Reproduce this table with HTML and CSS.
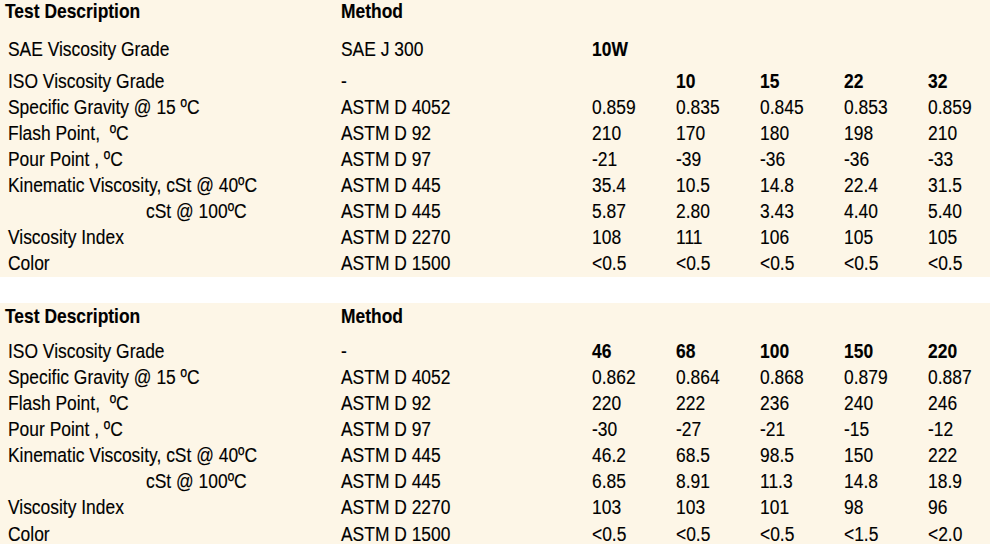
FILE: index.html
```html
<!DOCTYPE html>
<html lang="en">
<head>
<meta charset="utf-8">
<title>Typical Properties</title>
<link rel="stylesheet" href="styles.css">
</head>
<body>
<section class="spec spec-first">
  <div class="row head head-first"><span class="label hd">Test Description</span><span class="method hd">Method</span></div>
  <div class="row row-sae"><span class="label">SAE Viscosity Grade</span><span class="method">SAE J 300</span><span class="val b">10W</span></div>
  <div class="row"><span class="label">ISO Viscosity Grade</span><span class="method">-</span><span class="val"></span><span class="val b">10</span><span class="val b">15</span><span class="val b">22</span><span class="val b">32</span></div>
  <div class="row"><span class="label">Specific Gravity @ 15 ºC</span><span class="method">ASTM D 4052</span><span class="val">0.859</span><span class="val">0.835</span><span class="val">0.845</span><span class="val">0.853</span><span class="val">0.859</span></div>
  <div class="row"><span class="label">Flash Point,&nbsp; ºC</span><span class="method">ASTM D 92</span><span class="val">210</span><span class="val">170</span><span class="val">180</span><span class="val">198</span><span class="val">210</span></div>
  <div class="row"><span class="label">Pour Point , ºC</span><span class="method">ASTM D 97</span><span class="val">-21</span><span class="val">-39</span><span class="val">-36</span><span class="val">-36</span><span class="val">-33</span></div>
  <div class="row"><span class="label">Kinematic Viscosity, cSt @ 40ºC</span><span class="method">ASTM D 445</span><span class="val">35.4</span><span class="val">10.5</span><span class="val">14.8</span><span class="val">22.4</span><span class="val">31.5</span></div>
  <div class="row"><span class="label indent">cSt @ 100ºC</span><span class="method">ASTM D 445</span><span class="val">5.87</span><span class="val">2.80</span><span class="val">3.43</span><span class="val">4.40</span><span class="val">5.40</span></div>
  <div class="row"><span class="label">Viscosity Index</span><span class="method">ASTM D 2270</span><span class="val">108</span><span class="val">111</span><span class="val">106</span><span class="val">105</span><span class="val">105</span></div>
  <div class="row"><span class="label">Color</span><span class="method">ASTM D 1500</span><span class="val">&lt;0.5</span><span class="val">&lt;0.5</span><span class="val">&lt;0.5</span><span class="val">&lt;0.5</span><span class="val">&lt;0.5</span></div>
</section>
<section class="spec spec-second">
  <div class="row head"><span class="label hd">Test Description</span><span class="method hd">Method</span></div>
  <div class="row"><span class="label">ISO Viscosity Grade</span><span class="method">-</span><span class="val b">46</span><span class="val b">68</span><span class="val b">100</span><span class="val b">150</span><span class="val b">220</span></div>
  <div class="row"><span class="label">Specific Gravity @ 15 ºC</span><span class="method">ASTM D 4052</span><span class="val">0.862</span><span class="val">0.864</span><span class="val">0.868</span><span class="val">0.879</span><span class="val">0.887</span></div>
  <div class="row"><span class="label">Flash Point,&nbsp; ºC</span><span class="method">ASTM D 92</span><span class="val">220</span><span class="val">222</span><span class="val">236</span><span class="val">240</span><span class="val">246</span></div>
  <div class="row"><span class="label">Pour Point , ºC</span><span class="method">ASTM D 97</span><span class="val">-30</span><span class="val">-27</span><span class="val">-21</span><span class="val">-15</span><span class="val">-12</span></div>
  <div class="row"><span class="label">Kinematic Viscosity, cSt @ 40ºC</span><span class="method">ASTM D 445</span><span class="val">46.2</span><span class="val">68.5</span><span class="val">98.5</span><span class="val">150</span><span class="val">222</span></div>
  <div class="row"><span class="label indent">cSt @ 100ºC</span><span class="method">ASTM D 445</span><span class="val">6.85</span><span class="val">8.91</span><span class="val">11.3</span><span class="val">14.8</span><span class="val">18.9</span></div>
  <div class="row"><span class="label">Viscosity Index</span><span class="method">ASTM D 2270</span><span class="val">103</span><span class="val">103</span><span class="val">101</span><span class="val">98</span><span class="val">96</span></div>
  <div class="row"><span class="label">Color</span><span class="method">ASTM D 1500</span><span class="val">&lt;0.5</span><span class="val">&lt;0.5</span><span class="val">&lt;0.5</span><span class="val">&lt;1.5</span><span class="val">&lt;2.0</span></div>
</section>
</body>
</html>
```
FILE: styles.css
```css
html, body {
  margin: 0;
  padding: 0;
  background: #ffffff;
}

body {
  font-family: "Liberation Sans", Arial, sans-serif;
  font-size: 20.5px;
  color: #000;
  overflow: hidden;
}

.spec {
  background: #fdf6e7;
  display: flex;
  flex-direction: column;
}

.spec-first {
  margin-top: -2px;
  padding-bottom: 1px;
}

.spec-second {
  margin-top: 25.8px;
  min-height: 260px;
}

.row {
  display: grid;
  grid-template-columns: 341px 251px repeat(4, 84.1px) 1fr;
  height: 26.1px;
  line-height: 26px;
  white-space: nowrap;
}

.head {
  height: 34.7px;
}

.head-first {
  height: 38.4px;
}

.row-sae {
  height: 31.3px;
}

/* narrow (Arial Narrow-like) rendering of every cell */
.label,
.method,
.val {
  transform: scaleX(0.85);
  transform-origin: 0 50%;
  -webkit-text-stroke: 0.15px #000;
}

.label {
  padding-left: 9.4px;
}

.label.hd {
  padding-left: 5.9px;
}

.label.indent {
  padding-left: 171.8px;
}

.hd,
.b {
  font-weight: bold;
}
```
